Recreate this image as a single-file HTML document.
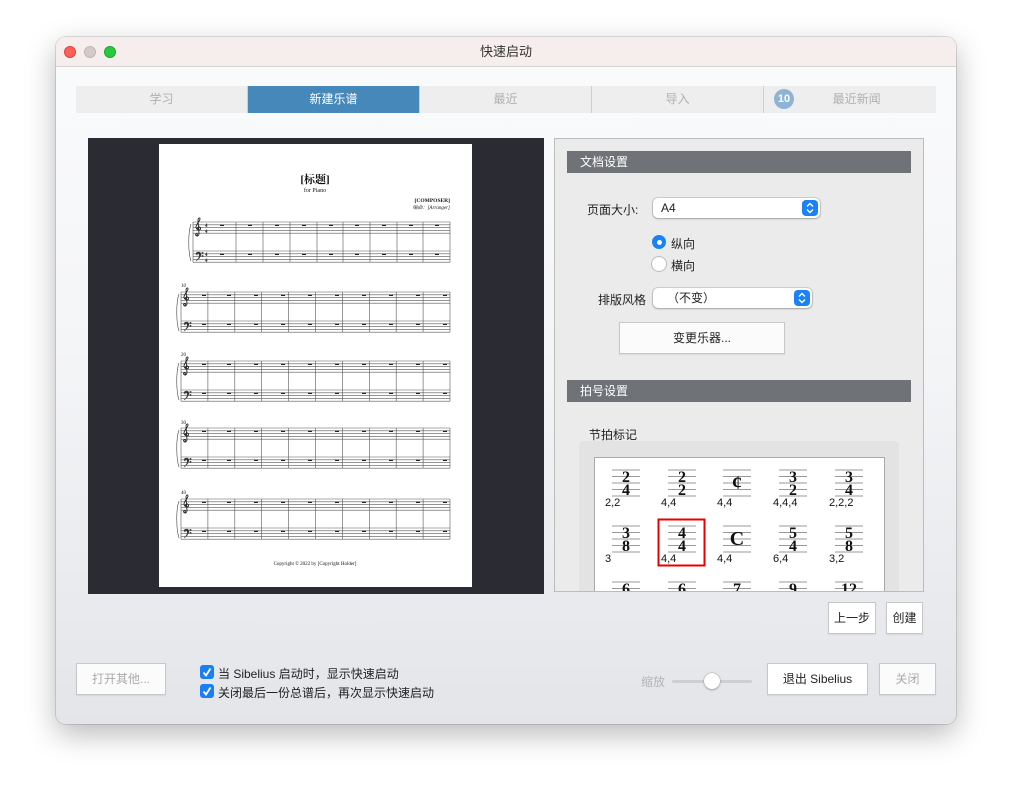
<!DOCTYPE html>
<html><head><meta charset="utf-8"><style>
*{box-sizing:border-box;margin:0;padding:0}
body{width:1012px;height:798px;background:#fff;position:relative;overflow:hidden;font-family:"Liberation Sans","Noto Sans CJK SC",sans-serif;font-size:12px;color:#222}
.a{position:absolute}
.win{left:56px;top:37px;width:900px;height:687px;border-radius:10px;background:linear-gradient(#fafbfc 0%,#f4f5f7 45%,#e3e5e9 100%);box-shadow:0 10px 30px rgba(0,0,0,.28),0 0 0 1px rgba(0,0,0,.12);overflow:hidden}
.tb{left:0;top:0;width:900px;height:30px;background:#f6eeec;border-bottom:1px solid #d8d4d3;text-align:center;line-height:30px;font-size:13px;color:#333}
.dot{width:12px;height:12px;border-radius:50%;top:9px}
.tab{top:86px;height:27px;background:#eeeeee;color:#b0b0b0;text-align:center;line-height:27px;font-size:12px;border-right:1px solid #cfcfcf}
.hdr{background:#6f7377;color:#fff;height:22px;line-height:22px;padding-left:13px;font-size:12px}
.btn{background:#fbfbfb;border:1px solid #c8c8c8;text-align:center;box-shadow:0 1px 1px rgba(0,0,0,.08);font-size:12px}
.pop{background:#fff;border-radius:5px;box-shadow:0 0 0 1px rgba(0,0,0,.12),0 1px 2px rgba(0,0,0,.2);height:20px;line-height:20px;font-size:12px}
.stp{width:16px;height:16px;border-radius:4px;background:#1a82f7;top:2px}
.cb{width:14px;height:14px;border-radius:3px;background:#1a7ff5}
</style></head><body>
<div class="a win">
 <div class="a tb">快速启动</div>
 <div class="a dot" style="left:8px;background:#fe5f57;border:1px solid #e0443e"></div>
 <div class="a dot" style="left:28px;background:#d1cbca;border:1px solid #bdb7b6"></div>
 <div class="a dot" style="left:48px;background:#28c840;border:1px solid #1aab29"></div>
</div>
<div class="a tab" style="left:76px;width:172px">学习</div>
<div class="a tab" style="left:248px;width:172px;background:#4788ba;color:#fff">新建乐谱</div>
<div class="a tab" style="left:420px;width:172px">最近</div>
<div class="a tab" style="left:592px;width:172px">导入</div>
<div class="a tab" style="left:764px;width:172px;border:none">&nbsp;&nbsp;&nbsp;&nbsp;最近新闻</div>
<div class="a" style="left:774px;top:89px;width:20px;height:20px;border-radius:50%;background:#8fb3d4;color:#fff;font-weight:bold;font-size:11px;text-align:center;line-height:20px">10</div>

<div class="a" style="left:88px;top:138px;width:456px;height:456px;background:#2b2c33"></div>
<div class="a" style="left:159px;top:144px;width:313px;height:443px;background:#fff"></div>
<svg class="a" style="left:0;top:0" width="1012" height="798">
<defs>
<g id="tc" fill="none" stroke="#222" stroke-width="0.9"><path d="M3 15c-2 0-3-1-2-2 1-1 2 0 1 1M2 14c0 0 1 2 2-1L3 -1c0-2 2-3 2-1 0 2-4 5-4 8 0 2 2 3 3 3 2 0 2-3 0-3-1 0-2 1-1 2"/></g>
<g id="bc" fill="#222"><path d="M1 3c0-2 4-3 5 0 0 3-3 6-5 7 2-2 4-4 3-7-1-1-2 0-2 1z"/><circle cx="7.5" cy="2" r="0.7"/><circle cx="7.5" cy="5" r="0.7"/></g>
<g id="sys" stroke="#555" stroke-width="0.6" fill="none">
 <path d="M181 0H450M181 2.8H450M181 5.6H450M181 8.4H450M181 11.2H450M181 29H450M181 31.8H450M181 34.6H450M181 37.4H450M181 40.2H450"/>
 <path d="M181 0V40.2M207.9 0V40.2M234.8 0V40.2M261.7 0V40.2M288.6 0V40.2M315.5 0V40.2M342.4 0V40.2M369.3 0V40.2M396.2 0V40.2M423.1 0V40.2M450 0V40.2"/>
 <path stroke="#222" stroke-width="1.4" d="M202 3.3h4M227 3.3h4M254 3.3h4M281 3.3h4M308 3.3h4M335 3.3h4M362 3.3h4M389 3.3h4M416 3.3h4M443 3.3h4M202 32.3h4M227 32.3h4M254 32.3h4M281 32.3h4M308 32.3h4M335 32.3h4M362 32.3h4M389 32.3h4M416 32.3h4M443 32.3h4"/>
 <path stroke="#444" d="M179 2C176 10 176 30 179 39"/>
 <use href="#tc" x="183" y="-1"/><use href="#bc" x="183" y="29"/>
</g>
</defs>
<g fill="#111" font-family="Liberation Serif,serif">
<text x="315" y="183" text-anchor="middle" font-size="11" font-weight="bold" font-family="Liberation Serif,'Noto Serif CJK SC',serif">[标题]</text>
<text x="315" y="192" text-anchor="middle" font-size="6">for Piano</text>
<text x="450" y="202" text-anchor="end" font-size="5.5" font-weight="bold">[COMPOSER]</text>
<text x="450" y="209" text-anchor="end" font-size="5" font-style="italic" font-family="Liberation Serif,'Noto Serif CJK SC',serif">编曲：[Arranger]</text>
<text x="315" y="565" text-anchor="middle" font-size="5">Copyright © 2022 by [Copyright Holder]</text>
<text x="181" y="287" font-size="5">10</text><text x="181" y="356" font-size="5">20</text><text x="181" y="424" font-size="5">30</text><text x="181" y="494" font-size="5">40</text>
</g>
<g stroke="#555" stroke-width="0.6" fill="none">
 <path d="M193 222H450M193 224.8H450M193 227.6H450M193 230.4H450M193 233.2H450M193 251H450M193 253.8H450M193 256.6H450M193 259.4H450M193 262.2H450"/>
 <path d="M193 222V262.2M236 222V262.2M263 222V262.2M290 222V262.2M317 222V262.2M343 222V262.2M370 222V262.2M397 222V262.2M423 222V262.2M450 222V262.2"/>
 <path stroke="#222" stroke-width="1.4" d="M220 225.3h4M248 225.3h4M275 225.3h4M302 225.3h4M329 225.3h4M355 225.3h4M382 225.3h4M409 225.3h4M435 225.3h4M220 254.3h4M248 254.3h4M275 254.3h4M302 254.3h4M329 254.3h4M355 254.3h4M382 254.3h4M409 254.3h4M435 254.3h4"/>
 <path stroke="#444" d="M191 224C188 232 188 252 191 261"/>
 <use href="#tc" x="195" y="221"/><use href="#bc" x="195" y="251"/>
</g>
<g font-family="Liberation Serif,serif" fill="#222" font-weight="bold" font-size="5">
<text x="205" y="227">4</text><text x="205" y="233">4</text>
<text x="205" y="256">4</text><text x="205" y="262">4</text>
</g>
<use href="#sys" y="292"/><use href="#sys" y="361"/><use href="#sys" y="428"/><use href="#sys" y="499"/>
</svg>

<div class="a" style="left:554px;top:138px;width:370px;height:454px;background:#ebebeb;border:1px solid #bcbcbc;overflow:hidden">
 <div class="a hdr" style="left:12px;top:12px;width:344px">文档设置</div>
 <div class="a" style="left:32px;top:62px;font-size:12px">页面大小:</div>
 <div class="a pop" style="left:98px;top:59px;width:167px;padding-left:8px">A4<div class="a stp" style="left:149px"><svg width="16" height="16"><path d="M5 6.5l3-3 3 3M5 9.5l3 3 3-3" fill="none" stroke="#fff" stroke-width="1.4"/></svg></div></div>
 <div class="a" style="left:97px;top:96px;width:14px;height:14px;border-radius:50%;background:#1a82f7"><div class="a" style="left:4.5px;top:4.5px;width:5px;height:5px;border-radius:50%;background:#fff"></div></div>
 <div class="a" style="left:116px;top:96px">纵向</div>
 <div class="a" style="left:97px;top:118px;width:14px;height:14px;border-radius:50%;background:#fff;box-shadow:0 0 0 1px #bbb"></div>
 <div class="a" style="left:116px;top:118px">横向</div>
 <div class="a" style="left:43px;top:152px">排版风格</div>
 <div class="a pop" style="left:98px;top:149px;width:159px;padding-left:14px">（不变）<div class="a stp" style="left:141px"><svg width="16" height="16"><path d="M5 6.5l3-3 3 3M5 9.5l3 3 3-3" fill="none" stroke="#fff" stroke-width="1.4"/></svg></div></div>
 <div class="a btn" style="left:64px;top:183px;width:166px;height:32px;line-height:30px">变更乐器...</div>
 <div class="a hdr" style="left:12px;top:241px;width:344px">拍号设置</div>
 <div class="a" style="left:34px;top:287px">节拍标记</div>
 <div class="a" style="left:24px;top:302px;width:320px;height:200px;background:#e3e3e3;border-radius:5px"></div>
 <div class="a" style="left:39px;top:318px;width:291px;height:200px;background:#fff;border:1px solid #a9a9a9"></div>
 <svg class="a" style="left:0;top:0" width="370" height="454">
  <defs><g id="st" stroke="#999" stroke-width="1"><path d="M-14 0H14M-14 6.5H14M-14 13H14M-14 19.5H14M-14 26H14"/></g></defs>
  <g font-family="Liberation Serif,serif" font-weight="bold" font-size="16" text-anchor="middle" fill="#111">
   <use href="#st" x="71" y="331"/><text x="71" y="343">2</text><text x="71" y="356">4</text>
   <use href="#st" x="127" y="331"/><text x="127" y="343">2</text><text x="127" y="356">2</text>
   <use href="#st" x="182" y="331"/><text x="182" y="350" font-size="20">¢</text>
   <use href="#st" x="238" y="331"/><text x="238" y="343">3</text><text x="238" y="356">2</text>
   <use href="#st" x="294" y="331"/><text x="294" y="343">3</text><text x="294" y="356">4</text>
   <use href="#st" x="71" y="387"/><text x="71" y="399">3</text><text x="71" y="412">8</text>
   <use href="#st" x="127" y="387"/><text x="127" y="399">4</text><text x="127" y="412">4</text>
   <use href="#st" x="182" y="387"/><text x="182" y="406" font-size="20">C</text>
   <use href="#st" x="238" y="387"/><text x="238" y="399">5</text><text x="238" y="412">4</text>
   <use href="#st" x="294" y="387"/><text x="294" y="399">5</text><text x="294" y="412">8</text>
   <use href="#st" x="71" y="443"/><text x="71" y="455">6</text>
   <use href="#st" x="127" y="443"/><text x="127" y="455">6</text>
   <use href="#st" x="182" y="443"/><text x="182" y="455">7</text>
   <use href="#st" x="238" y="443"/><text x="238" y="455">9</text>
   <use href="#st" x="294" y="443"/><text x="294" y="455">12</text>
  </g>
  <g font-family="Liberation Sans,sans-serif" font-size="11" fill="#111">
   <text x="50" y="367">2,2</text><text x="106" y="367">4,4</text><text x="162" y="367">4,4</text><text x="218" y="367">4,4,4</text><text x="274" y="367">2,2,2</text>
   <text x="50" y="423">3</text><text x="106" y="423">4,4</text><text x="162" y="423">4,4</text><text x="218" y="423">6,4</text><text x="274" y="423">3,2</text>
  </g>
  <rect x="103.5" y="380.5" width="46" height="46" fill="none" stroke="#e80000" stroke-width="2"/>
 </svg>
</div>

<div class="a btn" style="left:828px;top:602px;width:48px;height:32px;line-height:30px;background:#fff">上一步</div>
<div class="a btn" style="left:886px;top:602px;width:37px;height:32px;line-height:30px;background:#fff">创建</div>
<div class="a btn" style="left:76px;top:663px;width:90px;height:32px;line-height:30px;color:#aaa">打开其他...</div>
<div class="a cb" style="left:200px;top:665px"><svg width="14" height="14"><path d="M3.5 7.5l2.5 3 4.5-7" fill="none" stroke="#fff" stroke-width="1.8"/></svg></div>
<div class="a" style="left:218px;top:665px">当 Sibelius 启动时，显示快速启动</div>
<div class="a cb" style="left:200px;top:684px"><svg width="14" height="14"><path d="M3.5 7.5l2.5 3 4.5-7" fill="none" stroke="#fff" stroke-width="1.8"/></svg></div>
<div class="a" style="left:218px;top:684px">关闭最后一份总谱后，再次显示快速启动</div>
<div class="a" style="left:641px;top:673px;color:#b5b5b5">缩放</div>
<div class="a" style="left:672px;top:680px;width:80px;height:3px;border-radius:2px;background:#cfcfcf"></div>
<div class="a" style="left:704px;top:673px;width:16px;height:16px;border-radius:50%;background:#fff;box-shadow:0 0 0 0.5px #aaa,0 1px 2px rgba(0,0,0,.3)"></div>
<div class="a btn" style="left:767px;top:663px;width:101px;height:32px;line-height:30px;background:#fff">退出 Sibelius</div>
<div class="a btn" style="left:879px;top:663px;width:57px;height:32px;line-height:30px;color:#aaa">关闭</div>
</body></html>
